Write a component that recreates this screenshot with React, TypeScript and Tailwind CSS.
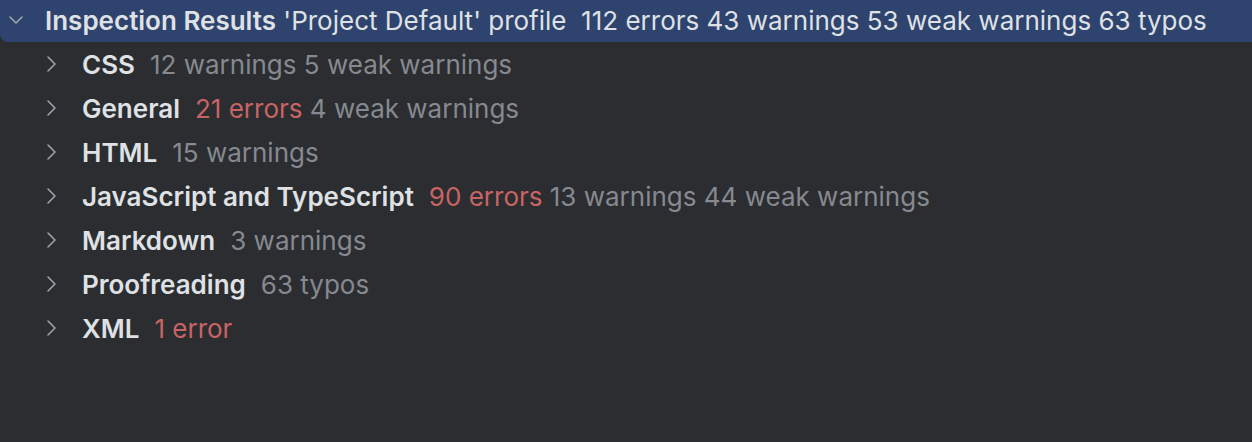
import React from "react";

const Chevron = ({ down }: { down?: boolean }) => (
  <svg width="14" height="18" viewBox="0 0 14 18" fill="none" className="shrink-0">
    {down ? (
      <path d="M1 6 L7 12 L13 6" stroke="#a3a6ad" strokeWidth="1.5" strokeLinecap="round" strokeLinejoin="round" />
    ) : (
      <path d="M3 2 L10 9 L3 16" stroke="#a3a6ad" strokeWidth="1.5" strokeLinecap="round" strokeLinejoin="round" />
    )}
  </svg>
);

type Part = { t: string; red?: boolean };
const rows: { name: string; parts: Part[] }[] = [
  { name: "CSS", parts: [{ t: "12 warnings 5 weak warnings" }] },
  { name: "General", parts: [{ t: "21 errors", red: true }, { t: "4 weak warnings" }] },
  { name: "HTML", parts: [{ t: "15 warnings" }] },
  { name: "JavaScript and TypeScript", parts: [{ t: "90 errors", red: true }, { t: "13 warnings 44 weak warnings" }] },
  { name: "Markdown", parts: [{ t: "3 warnings" }] },
  { name: "Proofreading", parts: [{ t: "63 typos" }] },
  { name: "XML", parts: [{ t: "1 error", red: true }] },
];

export default function App() {
  return (
    <div
      className="w-[1252px] h-[442px] bg-[#2b2d30] overflow-hidden text-[26px] text-[#dfe1e5]"
      style={{ fontFamily: "Inter, 'Noto Sans', sans-serif" }}
    >
      <div className="h-[42px] bg-[#2e436e] rounded-bl-[8px] flex items-center pl-[9px] pb-[2px] whitespace-pre">
        <Chevron down />
        <span className="ml-[22px] font-semibold">Inspection Results</span>
        <span> 'Project Default' profile  112 errors 43 warnings 53 weak warnings 63 typos</span>
      </div>
      <div>
        {rows.map((r) => (
          <div key={r.name} className="h-[44px] flex items-center pl-[45px] whitespace-pre">
            <Chevron />
            <span className="ml-[23px] font-semibold">{r.name}</span>
            <span className="ml-[15px]">
              {r.parts.map((p, i) => (
                <span key={i} className={p.red ? "text-[#c86464]" : "text-[#86898f]"}>
                  {i > 0 ? " " : ""}
                  {p.t}
                </span>
              ))}
            </span>
          </div>
        ))}
      </div>
    </div>
  );
}
